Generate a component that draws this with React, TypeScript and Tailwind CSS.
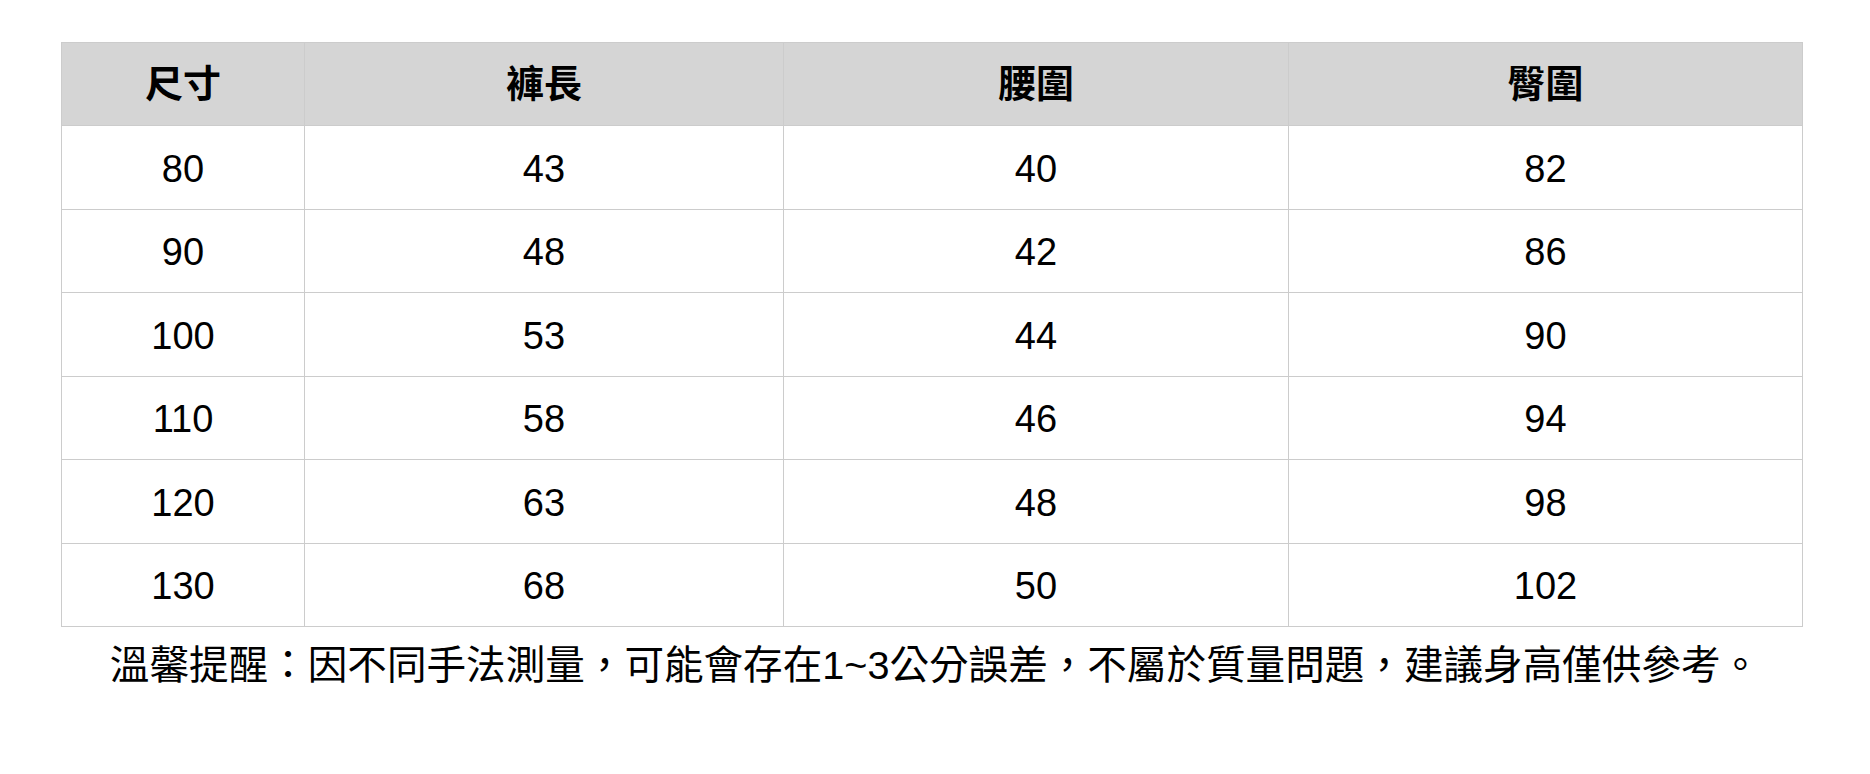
import React from "react";

const headers = ["尺寸", "褲長", "腰圍", "臀圍"];

const rows = [
  ["80", "43", "40", "82"],
  ["90", "48", "42", "86"],
  ["100", "53", "44", "90"],
  ["110", "58", "46", "94"],
  ["120", "63", "48", "98"],
  ["130", "68", "50", "102"],
];

const colWidths = ["w-[243px]", "w-[479px]", "w-[505px]", "w-[514px]"];

const font = {
  fontFamily:
    '"Liberation Sans", "Noto Sans CJK TC", "Noto Sans CJK SC", sans-serif',
};

export default function App() {
  return (
    <div className="w-[1870px] h-[774px] bg-white text-black" style={font}>
      <div className="pt-[42px] pl-[61px]">
        <table className="w-[1741px] border-collapse table-fixed">
          <colgroup>
            {colWidths.map((w, i) => (
              <col key={i} className={w} />
            ))}
          </colgroup>
          <thead>
            <tr className="h-[83px] bg-[#d5d5d5]">
              {headers.map((h) => (
                <th
                  key={h}
                  className="border border-[#cccccc] text-[38px] font-bold text-center align-middle"
                >
                  {h}
                </th>
              ))}
            </tr>
          </thead>
          <tbody>
            {rows.map((r, i) => (
              <tr key={i} className="h-[83.5px]">
                {r.map((c, j) => (
                  <td
                    key={j}
                    className="border border-[#cccccc] pt-[4px] text-[38px] text-center align-middle"
                  >
                    {c}
                  </td>
                ))}
              </tr>
            ))}
          </tbody>
        </table>
      </div>
      {/* note */}
      <p className="mt-[10px] text-center text-[39.6px] leading-[56px]">
        溫馨提醒：因不同手法測量，可能會存在1~3公分誤差，不屬於質量問題，建議身高僅供參考。
      </p>
    </div>
  );
}
